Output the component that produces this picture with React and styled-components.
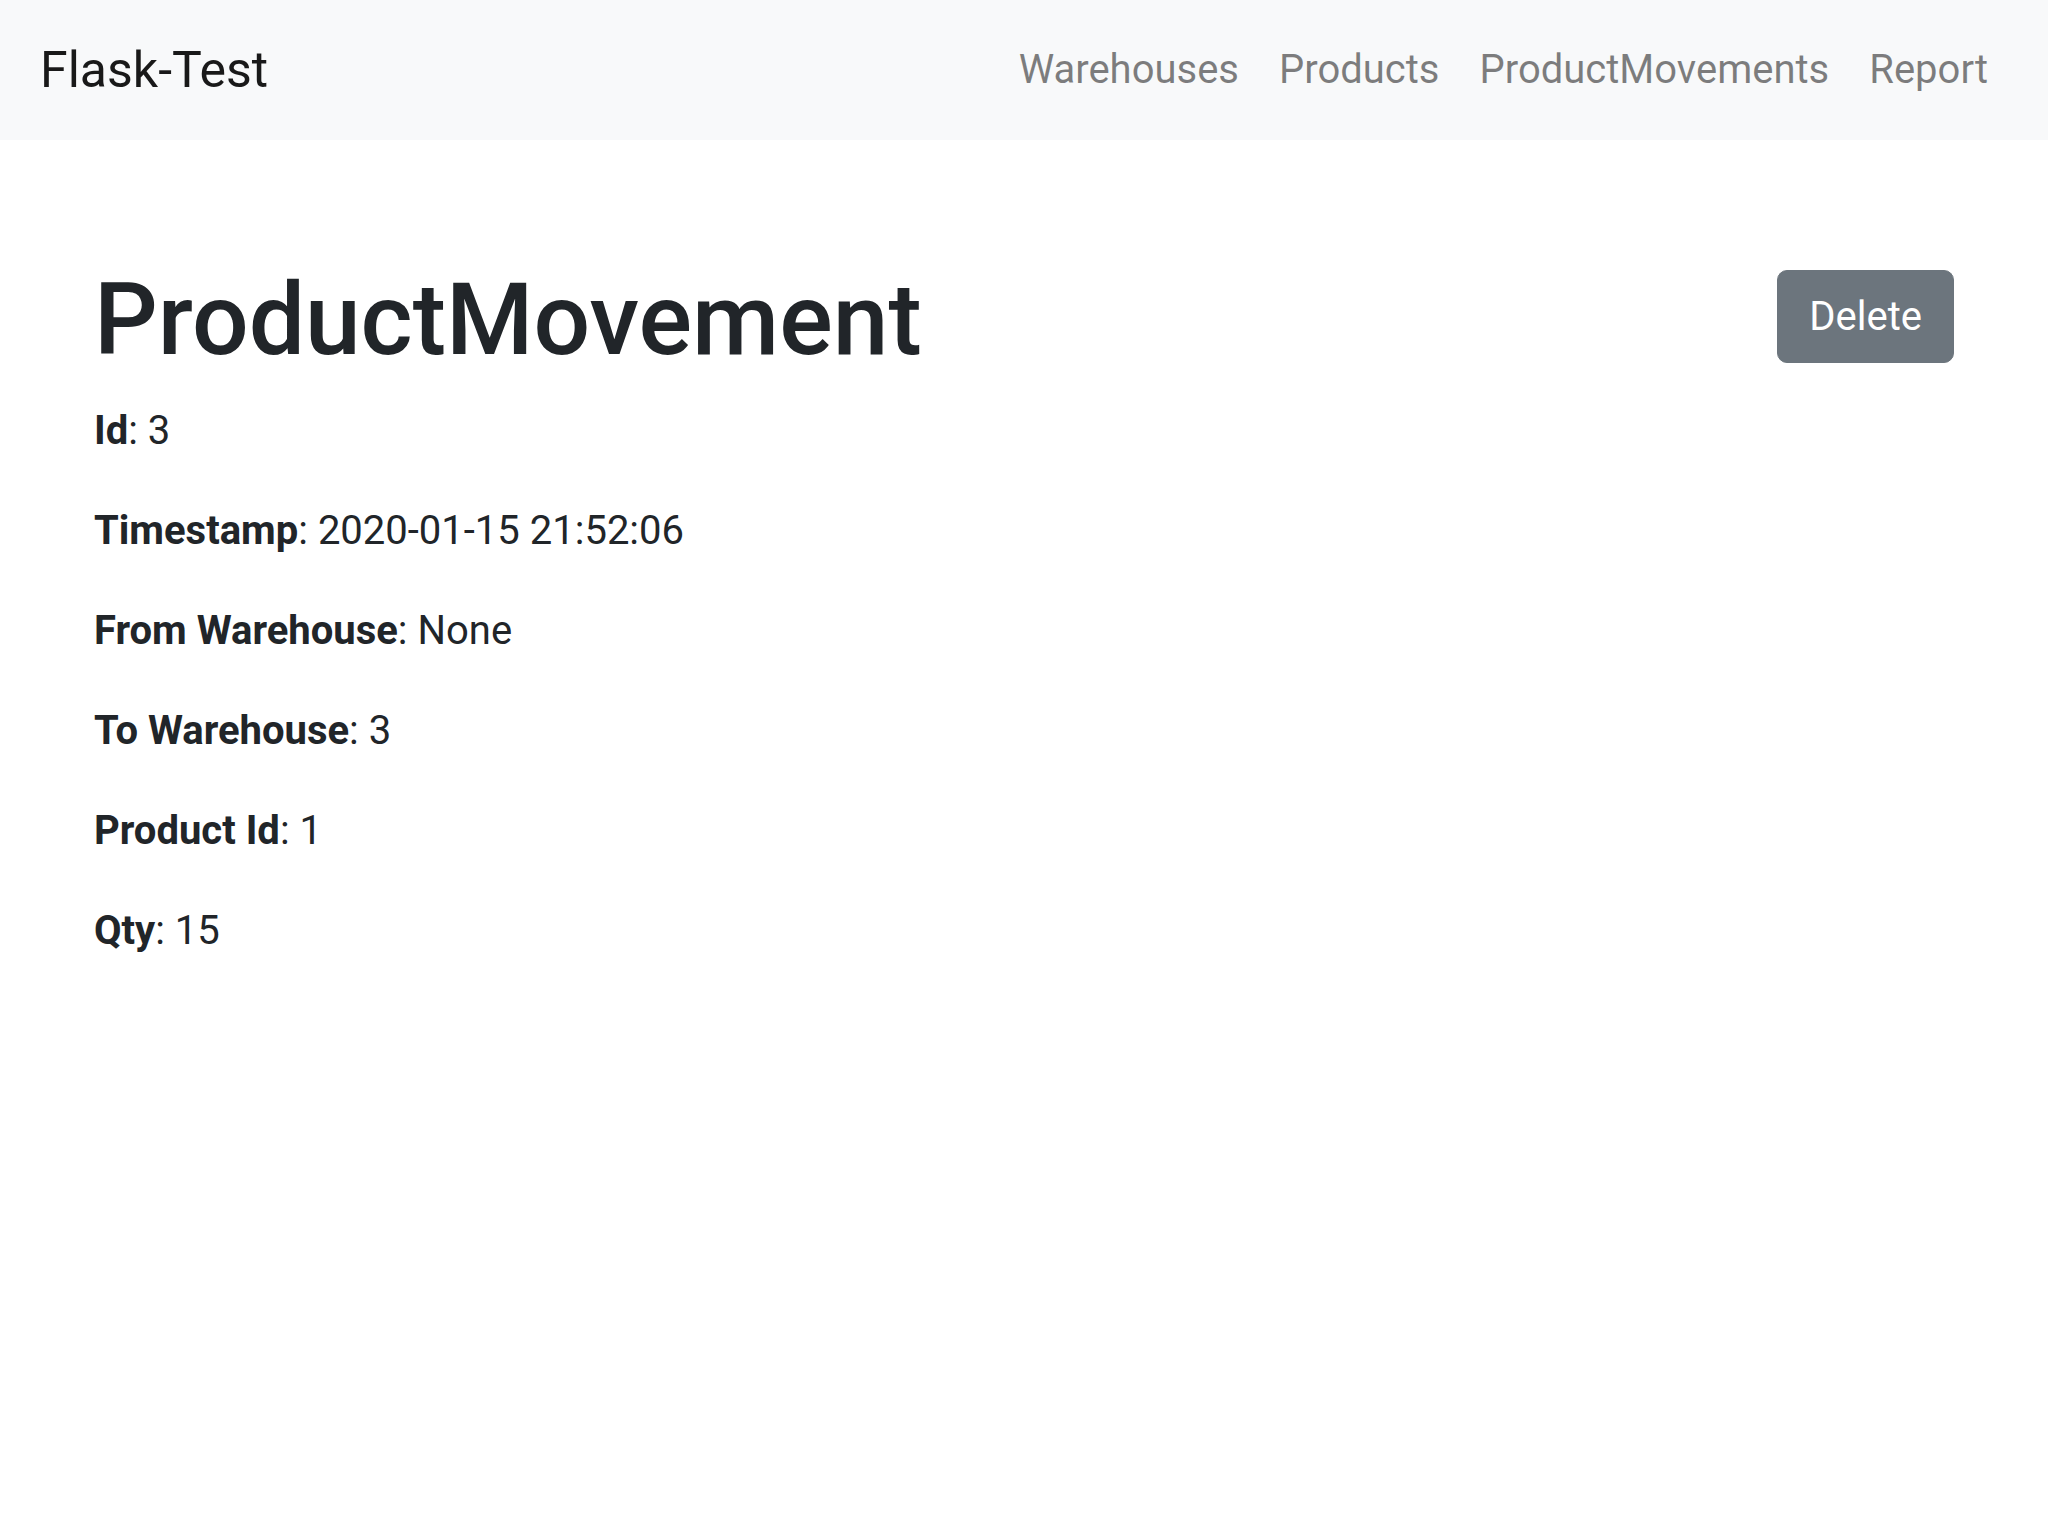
import React from "react";
import styled, { createGlobalStyle } from "styled-components";

const GlobalStyle = createGlobalStyle`
  * {
    box-sizing: border-box;
  }
  body {
    margin: 0;
    font-family: Roboto, "Liberation Sans", sans-serif;
    font-size: 40px;
    line-height: 1.5;
    color: #212529;
    background: #fff;
  }
`;

const NavBar = styled.nav`
  display: flex;
  justify-content: space-between;
  align-items: center;
  height: 140px;
  padding: 20px 40px;
  background-color: #f8f9fa;
`;

const Brand = styled.a`
  font-size: 50px;
  line-height: 1.5;
  padding: 12.5px 0;
  color: rgba(0, 0, 0, 0.9);
  text-decoration: none;
`;

const NavList = styled.ul`
  display: flex;
  list-style: none;
  margin: 0;
  padding: 0;
`;

const NavLink = styled.a`
  display: block;
  padding: 20px 20px;
  color: rgba(0, 0, 0, 0.5);
  text-decoration: none;
  &:hover {
    color: rgba(0, 0, 0, 0.7);
  }
`;

const Main = styled.main`
  padding: 120px 94px 0;
`;

const TitleRow = styled.div`
  display: flex;
  justify-content: space-between;
  align-items: flex-start;
  margin-bottom: 21px;
`;

const Title = styled.h1`
  margin: 0;
  font-size: 100px;
  font-weight: 500;
  line-height: 1.2;
`;

const DeleteButton = styled.button`
  margin-top: 10px;
  font-family: inherit;
  font-size: 40px;
  line-height: 1.5;
  padding: 16px 31px 15px;
  color: #fff;
  background-color: #6c757d;
  border: 1.5px solid #6c757d;
  border-radius: 10px;
  cursor: pointer;
`;

const Field = styled.p`
  margin: 0 0 40px;
  b {
    font-weight: 700;
  }
`;

const fields = [
  ["Id", "3"],
  ["Timestamp", "2020-01-15 21:52:06"],
  ["From Warehouse", "None"],
  ["To Warehouse", "3"],
  ["Product Id", "1"],
  ["Qty", "15"],
];

const App = () => {
  return (
    <>
      <GlobalStyle />
      <NavBar>
        <Brand href="#">Flask-Test</Brand>
        <NavList>
          <li>
            <NavLink href="#">Warehouses</NavLink>
          </li>
          <li>
            <NavLink href="#">Products</NavLink>
          </li>
          <li>
            <NavLink href="#">ProductMovements</NavLink>
          </li>
          <li>
            <NavLink href="#">Report</NavLink>
          </li>
        </NavList>
      </NavBar>
      <Main>
        <TitleRow>
          <Title>ProductMovement</Title>
          <DeleteButton>Delete</DeleteButton>
        </TitleRow>
        {fields.map(([label, value]) => (
          <Field key={label}>
            <b>{label}</b>: {value}
          </Field>
        ))}
      </Main>
    </>
  );
};

export default App;
